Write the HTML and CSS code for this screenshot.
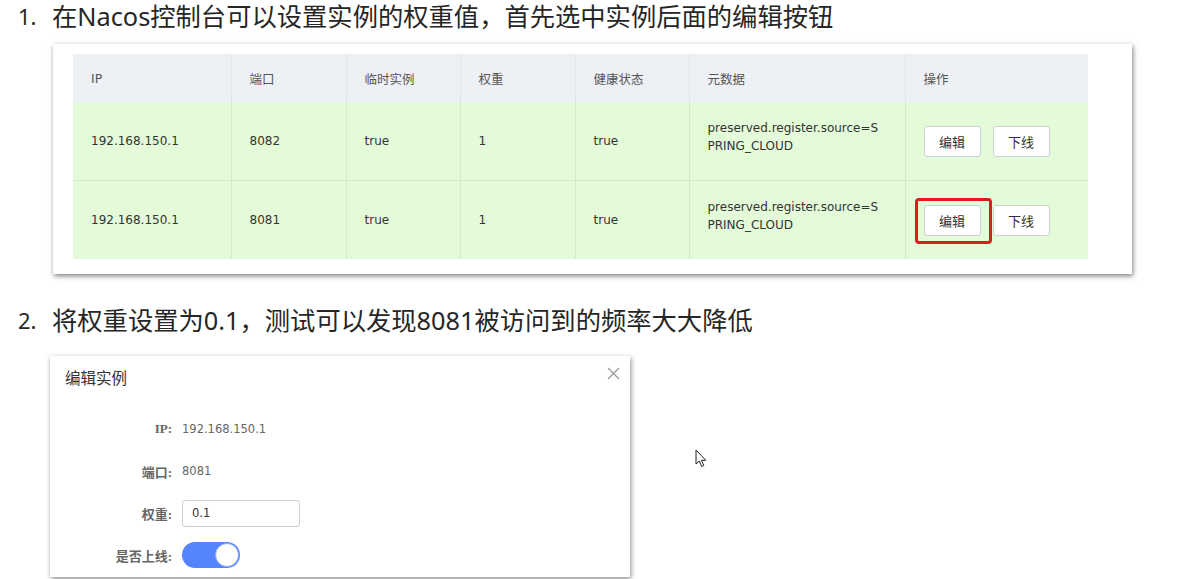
FILE: index.html
```html
<!DOCTYPE html>
<html lang="zh">
<head>
<meta charset="utf-8">
<title>Nacos 权重</title>
<link rel="stylesheet" href="styles.css">
</head>
<body>
<div class="page">
  <div class="step">
    <span class="num">1.</span>
    <span class="step-text">在Nacos控制台可以设置实例的权重值，首先选中实例后面的编辑按钮</span>
  </div>

  <div class="shot">
    <table class="tbl">
      <colgroup>
        <col class="c-ip"><col class="c-port"><col class="c-eph"><col class="c-w"><col class="c-h"><col class="c-meta"><col class="c-op">
      </colgroup>
      <thead>
        <tr><th>IP</th><th>端口</th><th>临时实例</th><th>权重</th><th>健康状态</th><th>元数据</th><th>操作</th></tr>
      </thead>
      <tbody>
        <tr>
          <td>192.168.150.1</td><td>8082</td><td>true</td><td>1</td><td>true</td>
          <td><div class="meta">preserved.register.source=S<br>PRING_CLOUD</div></td>
          <td><div class="ops"><span class="btn">编辑</span><span class="btn">下线</span></div></td>
        </tr>
        <tr>
          <td>192.168.150.1</td><td>8081</td><td>true</td><td>1</td><td>true</td>
          <td><div class="meta">preserved.register.source=S<br>PRING_CLOUD</div></td>
          <td><div class="ops"><span class="btn hl">编辑</span><span class="btn">下线</span></div></td>
        </tr>
      </tbody>
    </table>
  </div>

  <div class="step step2">
    <span class="num">2.</span>
    <span class="step-text">将权重设置为0.1，测试可以发现8081被访问到的频率大大降低</span>
  </div>

  <div class="dialog">
    <div class="dlg-head">
      <span class="dlg-title">编辑实例</span>
      <svg class="close" width="13" height="13" viewBox="0 0 13 13"><path d="M1 1L12 12M12 1L1 12" stroke="#9a9a9a" stroke-width="1.3" fill="none"/></svg>
    </div>
    <div class="form">
      <span class="lbl lbl-ip">IP:</span><span class="val">192.168.150.1</span>
      <span class="lbl">端口:</span><span class="val">8081</span>
      <span class="lbl">权重:</span><span class="val"><span class="input">0.1</span></span>
      <span class="lbl">是否上线:</span><span class="val"><span class="switch"><span class="knob"></span></span></span>
    </div>
  </div>

  <svg class="cursor" width="12" height="19" viewBox="0 0 12 19"><path d="M1 1L1 15L4.3 12L6.6 17.5L8.8 16.6L6.5 11.3L10.8 11.3Z" fill="#fff" stroke="#222" stroke-width="1" stroke-linejoin="round"/></svg>
</div>
</body>
</html>
```

FILE: styles.css
```css
html, body {
  margin: 0;
  padding: 0;
  background: #ffffff;
}

.page {
  position: relative;
  width: 1195px;
  height: 579px;
  overflow: hidden;
  font-family: "Noto Sans", "Noto Sans CJK SC", sans-serif;
}

.step {
  display: flex;
  align-items: center;
  height: 32px;
  line-height: 32px;
  color: #262626;
  font-size: 25.3px;
  font-family: "Noto Sans", "Noto Sans CJK SC", sans-serif;
}

.num {
  width: 34px;
  padding-left: 18px;
  font-size: 22px;
  flex: none;
}

.step-text {
  white-space: nowrap;
}

.shot {
  margin: 12px 0 0 53px;
  width: 1039px;
  height: 205px;
  padding: 10px 20px 15px 20px;
  background: #fff;
  box-shadow: 1px 2px 5px rgba(0, 0, 0, 0.5);
}

.tbl {
  width: 1015px;
  border-collapse: collapse;
  table-layout: fixed;
  font-family: "DejaVu Sans", "Noto Sans CJK SC", sans-serif;
  font-size: 12px;
  color: #333;
}

.c-ip { width: 158px; }
.c-port { width: 115px; }
.c-eph { width: 114px; }
.c-w { width: 115px; }
.c-h { width: 114px; }
.c-meta { width: 216px; }
.c-op { width: 183px; }

.tbl th {
  height: 48px;
  background: #edf0f4;
  text-align: left;
  font-weight: normal;
  color: #555;
  padding: 0 0 0 18px;
  border-left: 1px solid #e2e5ea;
  font-size: 12.5px;
}

.tbl th:first-child,
.tbl td:first-child {
  border-left: none;
}

.tbl td {
  height: 78px;
  background: #e3fbd9;
  padding: 0 0 0 18px;
  border-left: 1px solid #d3e9cb;
  border-top: 1px solid #d3e9cb;
  vertical-align: middle;
}

.tbl tbody tr:first-child td {
  border-top: none;
}

.meta {
  line-height: 18px;
  margin-bottom: 8px;
}

.ops {
  display: flex;
  gap: 12px;
}

.btn {
  display: flex;
  align-items: center;
  justify-content: center;
  width: 55px;
  height: 29px;
  background: #fff;
  border: 1px solid #cfcfcf;
  border-radius: 3px;
  font-family: "Noto Sans CJK SC", sans-serif;
  font-size: 13px;
  color: #333;
  position: relative;
}

.btn.hl::after {
  content: "";
  position: absolute;
  left: -10px;
  top: -8px;
  width: 71px;
  height: 40px;
  border: 3px solid #dd1c1c;
  border-radius: 4px;
}

.step2 {
  margin-top: 30px;
}

.dialog {
  margin: 20px 0 0 50px;
  width: 580px;
  height: 221px;
  background: #fff;
  box-shadow: 1px 2px 5px rgba(0, 0, 0, 0.45);
}

.dlg-head {
  display: flex;
  justify-content: space-between;
  align-items: center;
  padding: 8px 10px 0 15px;
  height: 26px;
}

.dlg-title {
  font-family: "Noto Sans CJK SC", sans-serif;
  font-size: 15.5px;
  color: #333;
}

.close {
  margin-top: -8px;
}

.form {
  display: grid;
  grid-template-columns: 122px 1fr;
  column-gap: 10px;
  grid-auto-rows: 28px;
  row-gap: 14px;
  margin-top: 25px;
  font-family: "DejaVu Sans", "Noto Sans CJK SC", sans-serif;
  font-size: 11.5px;
  color: #666;
}

.lbl {
  display: flex;
  align-items: center;
  justify-content: flex-end;
  font-weight: bold;
  color: #666;
  font-family: "Liberation Serif", "Noto Sans CJK SC", serif;
  font-size: 13px;
}

.lbl-ip {
  font-family: "Liberation Serif", serif;
}

.val {
  display: flex;
  align-items: center;
}

.input {
  display: flex;
  align-items: center;
  box-sizing: border-box;
  width: 118px;
  height: 27px;
  padding-left: 9px;
  border: 1px solid #cfcfcf;
  border-radius: 3px;
  color: #333;
}

.switch {
  display: flex;
  justify-content: flex-end;
  align-items: center;
  box-sizing: border-box;
  width: 58px;
  height: 26px;
  border-radius: 13px;
  background: #5584ff;
  padding: 1px;
}

.knob {
  box-sizing: border-box;
  width: 24px;
  height: 24px;
  border-radius: 50%;
  background: #fff;
  border: 1px solid #8aa8ff;
}

.cursor {
  position: absolute;
  left: 695px;
  top: 449px;
}
```
